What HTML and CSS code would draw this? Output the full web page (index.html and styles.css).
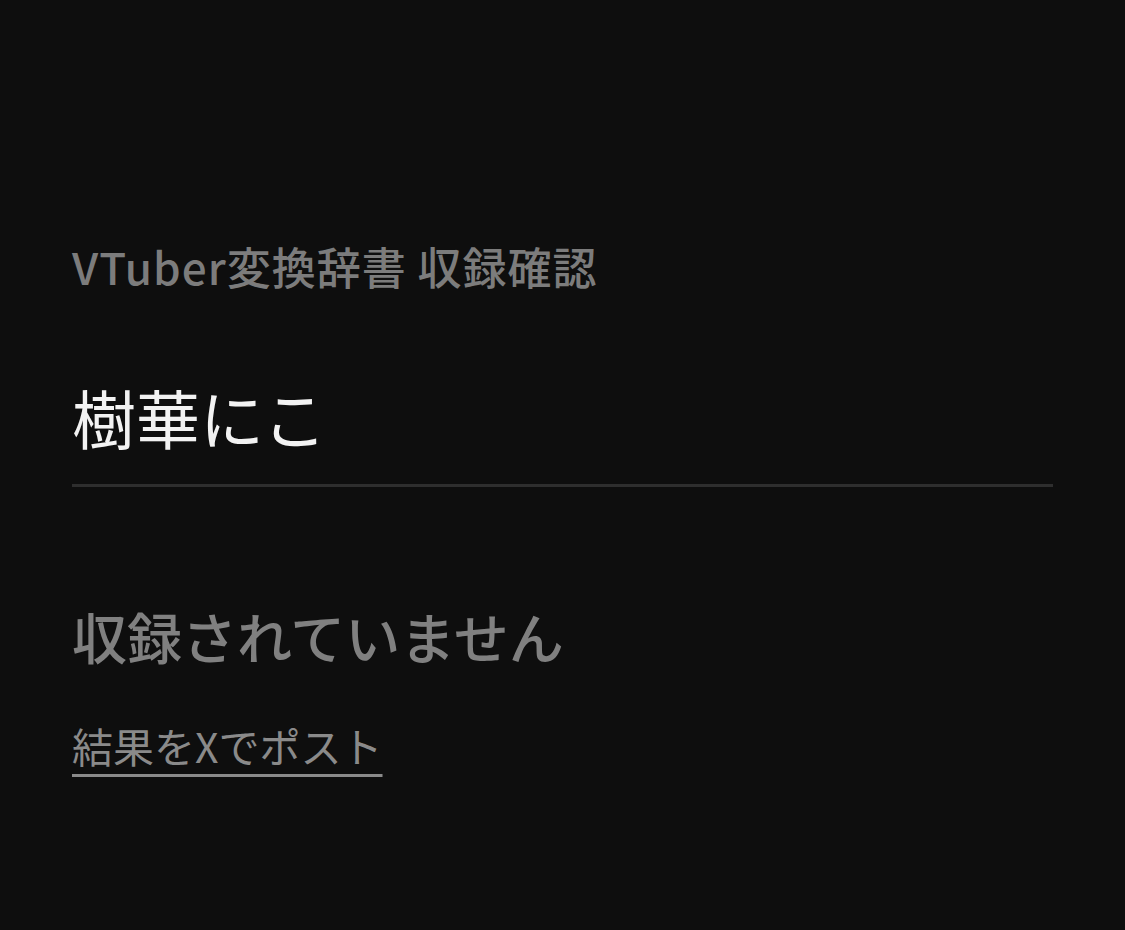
FILE: index.html
```html
<!DOCTYPE html>
<html lang="ja">
<head>
<meta charset="utf-8">
<title>VTuber変換辞書 収録確認</title>
<link rel="stylesheet" href="styles.css">
</head>
<body>
<main class="page">
  <p class="site-title">VTuber変換辞書 収録確認</p>
  <h1 class="name">樹華にこ</h1>
  <p class="status">収録されていません</p>
  <a class="post-link" href="#">結果をXでポスト</a>
</main>
</body>
</html>
```

FILE: styles.css
```css
html, body {
  margin: 0;
  padding: 0;
  background: #0e0e0e;
  height: 100%;
}
body {
  font-family: "Noto Sans CJK JP", "Noto Sans", sans-serif;
}
.page {
  padding: 236px 72px 0 72px;
  display: flex;
  flex-direction: column;
  align-items: flex-start;
}
.site-title {
  margin: 0;
  font-size: 44px;
  font-weight: 500;
  letter-spacing: 1px;
  color: #7c7c7c;
  line-height: 60px;
}
.name {
  margin: 0;
  margin-top: 80px;
  font-size: 64px;
  font-weight: 400;
  color: #f2f2f2;
  line-height: 80px;
  align-self: stretch;
  padding-bottom: 28px;
  border-bottom: 3px solid #2e2e2e;
}
.status {
  margin: 0;
  margin-top: 113px;
  font-size: 55px;
  font-weight: 500;
  color: #808080;
  line-height: 70px;
}
.post-link {
  margin-top: 47px;
  font-size: 41px;
  color: #8a8a8a;
  text-decoration: underline;
  text-decoration-thickness: 3px;
  text-underline-offset: 11px;
  line-height: 56px;
}
```
